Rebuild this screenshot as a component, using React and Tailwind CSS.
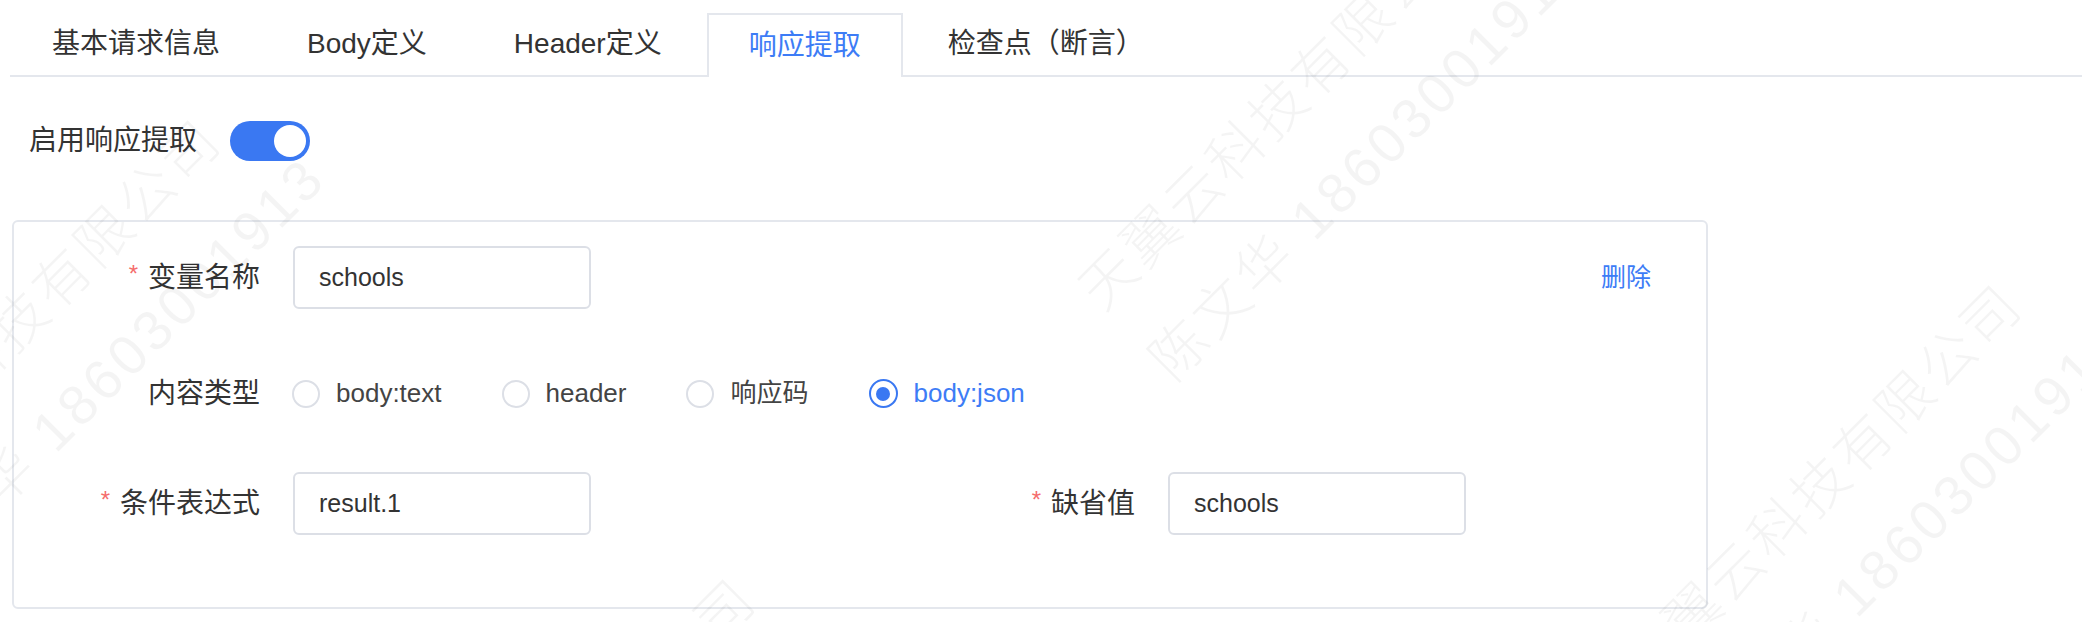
import React from 'react';

const tabs = ['基本请求信息', 'Body定义', 'Header定义', '响应提取', '检查点（断言）'];

const radios = [
  { label: 'body:text', checked: false },
  { label: 'header', checked: false },
  { label: '响应码', checked: false },
  { label: 'body:json', checked: true },
];

function Label({ text, required, width }) {
  return (
    <div className={`flex shrink-0 items-center justify-end text-[28px] text-[#333] ${width}`}>
      {required && <span className="mr-[10px] -mt-[8px] text-[24px] text-[#f56c6c]">*</span>}
      <span>{text}</span>
    </div>
  );
}

function Field({ value }) {
  return (
    <div className="ml-[33px] flex h-[63px] w-[298px] shrink-0 items-center rounded-[6px] border-2 border-[#dcdfe6] pl-[24px] text-[25px] text-[#333]">
      {value}
    </div>
  );
}

function Watermark({ pos }) {
  return (
    <div className={`absolute origin-top-left -rotate-45 whitespace-nowrap text-[56px] font-light leading-[100px] tracking-[4px] text-black/[0.045] ${pos}`}>
      <div>天翼云科技有限公司</div>
      <div>陈文华 18603001913</div>
    </div>
  );
}

export default function App() {
  return (
    <div className="relative h-[622px] w-full overflow-hidden bg-white font-['Liberation_Sans','Noto_Sans_CJK_SC',sans-serif] text-[#333]">
      {/* tabs */}
      <div className="pl-[10px] pt-[13px]">
        <div className="flex items-end gap-[3px] border-b-2 border-[#e4e7ed]">
          {tabs.map((t) =>
            t === '响应提取' ? (
              <div
                key={t}
                className="-mb-[2px] flex h-[64px] items-center border-x-2 border-t-2 border-[#e4e7ed] bg-white px-[40px] text-[28px] text-[#3d7cf6]"
              >
                {t}
              </div>
            ) : (
              <div key={t} className="flex h-[62px] items-center px-[42px] text-[28px] text-[#333]">
                {t}
              </div>
            )
          )}
        </div>
      </div>

      {/* switch */}
      <div className="mt-[43px] flex items-center pl-[29px]">
        <span className="text-[28px] text-[#333]">启用响应提取</span>
        <div className="ml-[33px] flex h-[40px] w-[80px] items-center justify-end rounded-full bg-[#3a78f2] pr-[4px]">
          <div className="h-[32px] w-[32px] rounded-full bg-white" />
        </div>
      </div>

      {/* extraction card */}
      <div className="ml-[12px] mt-[58px] h-[389px] w-[1696px] rounded-[6px] border-2 border-[#e4e7ed] pt-[24px]">
        <div className="flex h-[63px] items-center">
          <Label text="变量名称" required width="w-[246px]" />
          <Field value="schools" />
          <span className="ml-auto mr-[55px] text-[25px] text-[#3d7cf6]">删除</span>
        </div>

        <div className="mt-[53px] flex h-[63px] items-center">
          <Label text="内容类型" width="w-[246px]" />
          <div className="ml-[32px] flex items-center">
            {radios.map((r) => (
              <div key={r.label} className="mr-[60px] flex items-center">
                {r.checked ? (
                  <div className="flex h-[29px] w-[29px] items-center justify-center rounded-full border-2 border-[#3a78f2]">
                    <div className="h-[14px] w-[14px] rounded-full bg-[#3a78f2]" />
                  </div>
                ) : (
                  <div className="h-[28px] w-[28px] rounded-full border-2 border-[#dcdfe6]" />
                )}
                <span className={`ml-[16px] text-[26px] ${r.checked ? 'text-[#3d7cf6]' : 'text-[#444]'}`}>
                  {r.label}
                </span>
              </div>
            ))}
          </div>
        </div>

        <div className="mt-[47px] grid h-[63px] grid-cols-2">
          <div className="flex items-center">
            <Label text="条件表达式" required width="w-[246px]" />
            <Field value="result.1" />
          </div>
          <div className="flex items-center">
            <Label text="缺省值" required width="w-[275px]" />
            <Field value="schools" />
          </div>
        </div>
      </div>

      {/* watermark overlay */}
      <div className="pointer-events-none absolute inset-0 overflow-hidden">
        <Watermark pos="left-[-205px] top-[476px]" />
        <Watermark pos="left-[1054px] top-[264px]" />
        <Watermark pos="left-[1596px] top-[641px]" />
        <Watermark pos="left-[330px] top-[935px]" />
      </div>
    </div>
  );
}
